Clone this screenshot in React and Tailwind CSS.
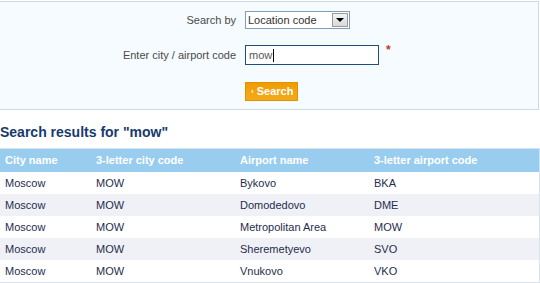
import React from 'react';

const rows = [
    { city: 'Moscow', cityCode: 'MOW', airport: 'Bykovo', airportCode: 'BKA' },
    { city: 'Moscow', cityCode: 'MOW', airport: 'Domodedovo', airportCode: 'DME' },
    { city: 'Moscow', cityCode: 'MOW', airport: 'Metropolitan Area', airportCode: 'MOW' },
    { city: 'Moscow', cityCode: 'MOW', airport: 'Sheremetyevo', airportCode: 'SVO' },
    { city: 'Moscow', cityCode: 'MOW', airport: 'Vnukovo', airportCode: 'VKO' },
];

export default function App() {
    return (
        <div className="w-[540px] h-[283px] bg-white overflow-hidden text-[11px] leading-[13px]" style={{ fontFamily: '"Liberation Sans", Arial, sans-serif' }}>
            {/* Search form panel */}
            <div className="mt-px w-[539px] h-[109px] bg-[#f5fbfe] border border-l-0 border-[#cddbe4] pt-[9px]">
                <div className="grid grid-cols-[236px_auto] gap-x-[9px] items-center">
                    <div className="text-right text-[#4a4a4a]">Search by</div>
                    <div className="flex items-center w-[105px] h-[18px] bg-white border border-[#7f9db9]">
                        <span className="flex-1 pl-[2px] text-[#333] leading-none">Location code</span>
                        <div className="w-[16px] h-[14px] mr-px bg-gradient-to-b from-[#f4f4f4] to-[#d8d8d8] border border-[#9a9a9a] flex items-center justify-center">
                            <div className="w-0 h-0 border-l-[4px] border-r-[4px] border-t-[4px] border-l-transparent border-r-transparent border-t-black" />
                        </div>
                    </div>

                    <div className="text-right text-[#4a4a4a] mt-[16px]">Enter city / airport code</div>
                    <div className="flex items-start mt-[16px]">
                        <div className="flex items-center w-[134px] h-[20px] bg-white border border-[#1d4f7e] pl-[3px] text-[#555]">
                            mow<span className="w-px h-[13px] bg-black ml-px" />
                        </div>
                        <span className="ml-[7px] -mt-[1px] text-[#c0392b] font-bold text-[12px]">*</span>
                    </div>

                    <div />
                    <div className="mt-[17px]">
                        <div className="inline-flex items-center w-[53px] h-[19px] bg-gradient-to-b from-[#f09c00] to-[#f5aa18] border border-[#e09200] pl-[5px] text-white font-bold">
                            <span className="text-[8px] mr-[3px]">›</span>Search
                        </div>
                    </div>
                </div>
            </div>

            {/* Results heading */}
            <h2 className="mt-[14px] text-[14px] leading-[16px] font-bold text-[#173a6c]">Search results for "mow"</h2>

            {/* Results table */}
            <div className="mt-[8px] w-[540px] border border-l-0 border-[#d6e3ec]">
                <div className="grid grid-cols-[91px_144px_134px_1fr] items-center h-[23px] pl-[5px] bg-[#99cdef] text-white font-bold">
                    <div>City name</div>
                    <div>3-letter city code</div>
                    <div>Airport name</div>
                    <div>3-letter airport code</div>
                </div>
                {rows.map((r, i) => (
                    <div
                        key={i}
                        className={`grid grid-cols-[91px_144px_134px_1fr] items-center h-[22px] pl-[5px] text-[#1f2d4d] ${i % 2 === 1 ? 'bg-[#f0f1f7]' : 'bg-white'}`}
                    >
                        <div>{r.city}</div>
                        <div>{r.cityCode}</div>
                        <div>{r.airport}</div>
                        <div>{r.airportCode}</div>
                    </div>
                ))}
            </div>
        </div>
    );
}
